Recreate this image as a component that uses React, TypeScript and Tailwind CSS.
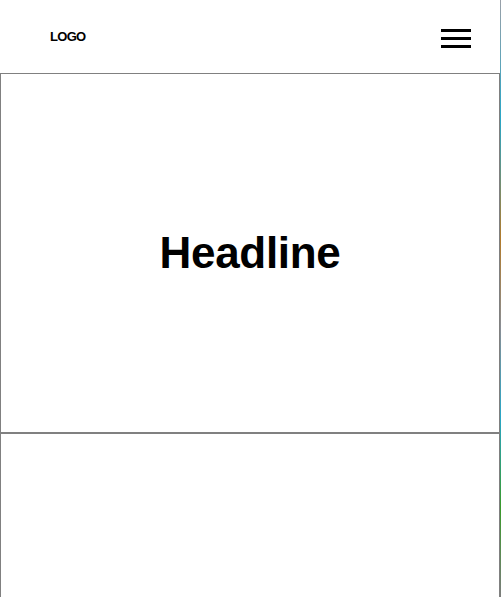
export default function App() {
  return (
    <div className="flex h-[597px] overflow-hidden bg-white font-['Liberation_Sans',Arial,sans-serif]">
      <div className="w-[500px] shrink-0">
        <header className="flex h-[73px] items-center justify-between pl-[50px] pr-[29px]">
          <span className="text-[13px] font-bold leading-none tracking-[-0.7px] text-black">LOGO</span>
          <button className="flex w-[30px] flex-col gap-[5px] pt-[3px]" aria-label="Menu">
            <span className="h-[3px] w-full bg-black" />
            <span className="h-[3px] w-full bg-black" />
            <span className="h-[3px] w-full bg-black" />
          </button>
        </header>
        <section className="flex h-[360px] items-center justify-center border border-[#808080]">
          <h1 className="text-[44px] font-bold leading-none tracking-[-0.3px] text-black">Headline</h1>
        </section>
        <section className="h-[360px] border border-[#808080] bg-[linear-gradient(to_bottom,#ffffff_0%,#ffffff_70%,#f3f3f3_100%)]" />
      </div>
      <div className="w-px shrink-0 bg-[linear-gradient(to_bottom,#9aa0a8_0%,#2aa7c7_20%,#b27b2c_40%,#8a8f96_55%,#2aa7c7_70%,#3a9a2a_85%,#7d7d7d_100%)]" />
    </div>
  )
}
